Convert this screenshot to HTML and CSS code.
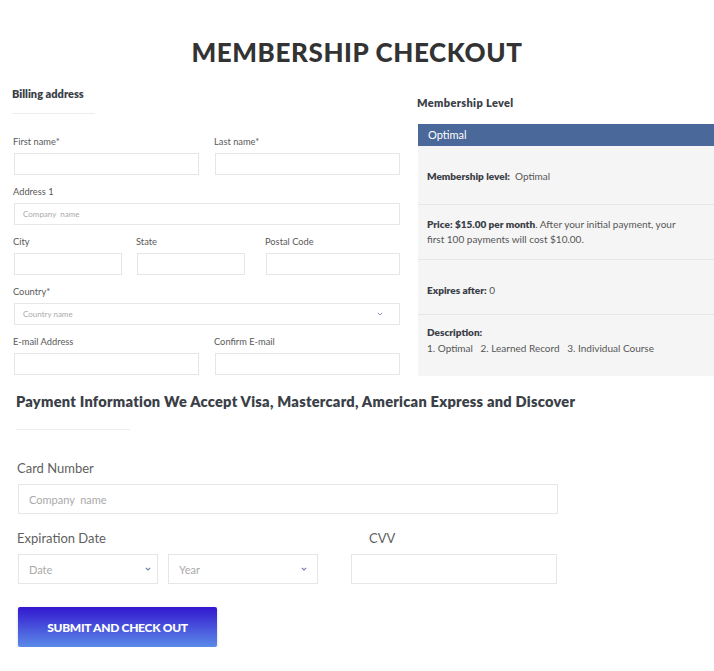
FILE: index.html
```html
<!DOCTYPE html>
<html lang="en">
<head>
<meta charset="utf-8">
<title>Membership Checkout</title>
<link rel="stylesheet" href="styles.css">
</head>
<body>
<h1 class="title">MEMBERSHIP CHECKOUT</h1>
<div class="top">
  <section class="billing">
    <h2 class="sec-head">Billing address</h2>
    <div class="form">
      <div class="row two">
        <div class="field"><label>First name*</label><input class="box" type="text"></div>
        <div class="field"><label>Last name*</label><input class="box" type="text"></div>
      </div>
      <div class="row">
        <div class="field"><label>Address 1</label><input class="box" type="text" placeholder="Company  name"></div>
      </div>
      <div class="row three">
        <div class="field"><label>City</label><input class="box sm" type="text"></div>
        <div class="field"><label>State</label><input class="box sm" type="text"></div>
        <div class="field"><label>Postal Code</label><input class="box" type="text"></div>
      </div>
      <div class="row">
        <div class="field"><label>Country*</label>
          <div class="box select"><span class="ph">Country  name</span>
            <svg class="chev" width="6" height="4" viewBox="0 0 6 4"><path d="M0.8 0.8 L3 3 L5.2 0.8" fill="none" stroke="#8a93ad" stroke-width="1"/></svg>
          </div>
        </div>
      </div>
      <div class="row two">
        <div class="field"><label>E-mail Address</label><input class="box" type="text"></div>
        <div class="field"><label>Confirm E-mail</label><input class="box" type="text"></div>
      </div>
    </div>
  </section>
  <aside class="level">
    <h2 class="level-head">Membership Level</h2>
    <div class="level-bar">Optimal</div>
    <div class="panel">
      <div class="prow p1"><b>Membership level:</b>&nbsp; Optimal</div>
      <div class="prow p2"><b>Price: $15.00 per month</b>. After your initial payment, your<br>first 100 payments will cost $10.00.</div>
      <div class="prow p3"><b>Expires after:</b> 0</div>
      <div class="prow p4"><b>Description:</b><br>1. Optimal &nbsp; 2. Learned Record &nbsp; 3. Individual Course</div>
    </div>
  </aside>
</div>
<section class="payment">
  <h2 class="pay-head">Payment Information We Accept Visa, Mastercard, American Express and Discover</h2>
  <div class="pfield">
    <label class="plabel">Card Number</label>
    <input class="pbox card" type="text" placeholder="Company  name">
  </div>
  <div class="exp-row">
    <div class="pfield">
      <label class="plabel">Expiration Date</label>
      <div class="selects">
        <div class="pbox pselect date"><span class="ph2">Date</span>
          <svg class="chev" width="6" height="4" viewBox="0 0 6 4"><path d="M0.8 0.8 L3 3 L5.2 0.8" fill="none" stroke="#6f7fb0" stroke-width="1.1"/></svg>
        </div>
        <div class="pbox pselect year"><span class="ph2">Year</span>
          <svg class="chev" width="6" height="4" viewBox="0 0 6 4"><path d="M0.8 0.8 L3 3 L5.2 0.8" fill="none" stroke="#6f7fb0" stroke-width="1.1"/></svg>
        </div>
      </div>
    </div>
    <div class="pfield cvv">
      <label class="plabel cvv-label">CVV</label>
      <input class="pbox cvv-box" type="text">
    </div>
  </div>
  <button class="submit" type="button">SUBMIT AND CHECK OUT</button>
</section>
</body>
</html>
```
FILE: styles.css
```css
* { box-sizing: border-box; }
html, body { margin: 0; padding: 0; background: #fff; }
body {
  font-family: "Lato", "Liberation Sans", sans-serif;
  color: #555;
  width: 714px;
  overflow: hidden;
}
.title {
  margin: 37px 0 0;
  text-align: center;
  font-size: 26px;
  line-height: 30px;
  font-weight: 900;
  letter-spacing: 0.6px;
  color: #333;
}
.top {
  display: flex;
  margin-top: 21px;
}
.billing {
  width: 400px;
  padding-left: 12px;
  flex: none;
}
.sec-head {
  margin: 0;
  width: 83px;
  font-size: 11px;
  line-height: 12px;
  font-weight: 800;
  color: #3b3f48;
  padding-bottom: 13px;
  border-bottom: 1px solid #ececec;
}
.form { padding-left: 2px; margin-top: 22px; }
.row { margin-bottom: 11px; }
.row:last-child { margin-bottom: 0; }
.row.two { display: grid; grid-template-columns: 185px 185px; column-gap: 16px; }
.row.three { display: grid; grid-template-columns: 123px 129px 134px; }
.field label {
  display: block;
  font-size: 9.3px;
  line-height: 12px;
  color: #5a5a5a;
  margin-bottom: 5px;
  margin-left: -1px;
}
.box {
  display: block;
  width: 100%;
  height: 22px;
  border: 1px solid #e6e6e6;
  background: #fff;
  margin: 0;
  padding: 0 8px;
  font-family: inherit;
  font-size: 8px;
  color: #999;
  outline: none;
}
.box.sm { width: 108px; }
.box::placeholder { color: #aaa; }
.select {
  display: flex;
  align-items: center;
  justify-content: space-between;
  padding: 0 16px 0 8px;
}
.ph { font-size: 8px; color: #aaa; }
.chev { display: block; }

.level {
  margin-left: 17px;
  width: 297px;
  flex: none;
  padding-top: 9px;
}
.level-head {
  margin: 0;
  font-size: 11px;
  line-height: 12px;
  font-weight: 800;
  color: #3b3f48;
  letter-spacing: 0.35px;
}
.level-bar {
  margin: 15px 0 0 1px;
  height: 22px;
  line-height: 22px;
  background: #4a6899;
  color: #fff;
  font-size: 11px;
  padding-left: 10px;
}
.panel {
  margin-left: 1px;
  background: #f5f5f5;
  height: 230px;
}
.prow {
  padding-left: 9px;
  font-size: 10px;
  line-height: 15px;
  color: #555;
  border-bottom: 1px solid #e6e6e6;
}
.prow b { color: #3b3f48; font-weight: 800; }
.p1 { height: 59px; padding-top: 23px; }
.p2 { height: 55px; padding-top: 12px; }
.p3 { height: 55px; padding-top: 23px; }
.p4 { border-bottom: 0; padding-top: 9px; line-height: 16px; }

.payment { padding-left: 16px; margin-top: 18px; }
.pay-head {
  margin: 0;
  font-size: 14.6px;
  line-height: 16px;
  font-weight: 800;
  color: #3b3f48;
  letter-spacing: 0.25px;
}
.pay-head::after {
  content: "";
  display: block;
  width: 114px;
  margin-top: 19px;
  border-bottom: 1px solid #ececec;
}
.pfield { margin-top: 30px; padding-left: 2px; }
.plabel {
  display: block;
  font-size: 13px;
  line-height: 16px;
  color: #5f5f5f;
  margin-left: -1px;
  margin-bottom: 8px;
}
.pbox {
  display: block;
  height: 30px;
  border: 1px solid #e6e6e6;
  background: #fff;
  margin: 0;
  padding: 0 10px;
  font-family: inherit;
  font-size: 11px;
  outline: none;
}
.pbox::placeholder { color: #aaa; }
.card { width: 540px; }
.exp-row { display: flex; }
.exp-row .pfield { margin-top: 16px; }
.selects { display: flex; gap: 10px; }
.pselect {
  display: flex;
  align-items: center;
  justify-content: space-between;
  padding: 0 6px 0 10px;
}
.pselect.date { width: 140px; }
.pselect.year { width: 150px; padding-right: 10px; }
.ph2 { font-size: 11px; color: #aaa; }
.exp-row .cvv { padding-left: 0; margin-left: 33px; }
.cvv-label { margin-left: 18px; }
.cvv-box { width: 206px; }
.submit {
  display: block;
  margin: 23px 0 0 2px;
  width: 199px;
  height: 40px;
  border: 0;
  border-radius: 2px;
  background: linear-gradient(180deg, #3317cf 0%, #5b8be8 100%);
  box-shadow: 0 1px 3px rgba(0,0,0,0.18);
  color: #fff;
  font-family: inherit;
  font-weight: 900;
  font-size: 12px;
  letter-spacing: -0.3px;
  cursor: pointer;
}
```
